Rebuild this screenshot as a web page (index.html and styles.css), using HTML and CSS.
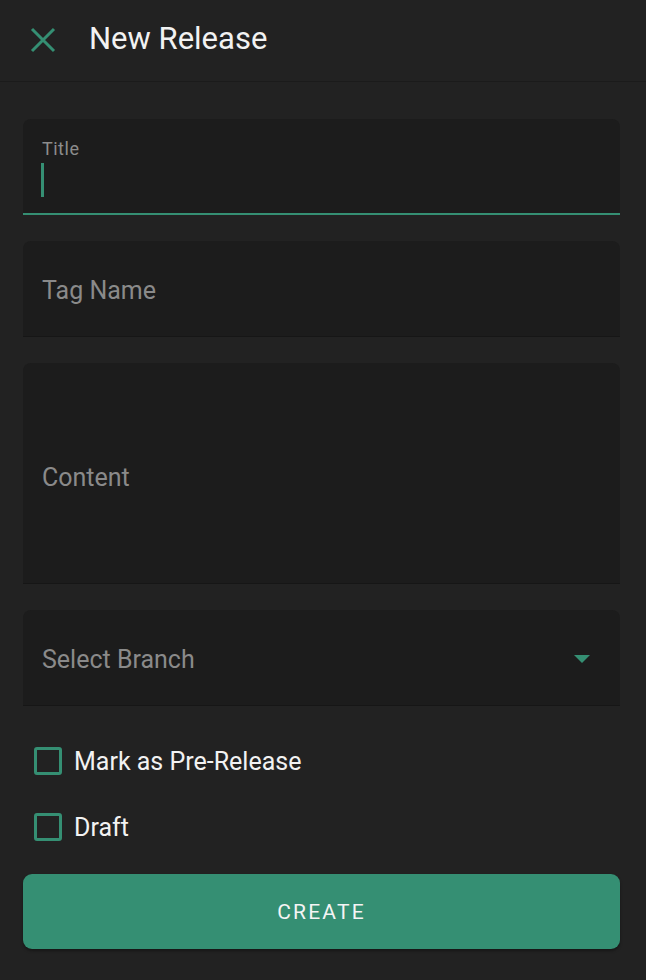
FILE: index.html
```html
<!DOCTYPE html>
<html>
<head>
<meta charset="utf-8">
<link rel="stylesheet" href="styles.css">
</head>
<body>
<div class="app">
  <header class="toolbar">
    <svg class="close" width="26" height="26" viewBox="0 0 26 26"><path d="M2 2 L24 24 M24 2 L2 24" stroke="#358f73" stroke-width="3" stroke-linecap="butt"/></svg>
    <h1 class="title">New Release</h1>
  </header>
  <main class="form">
    <div class="field field-focused">
      <span class="label">Title</span>
      <span class="cursor"></span>
    </div>
    <div class="field"><span class="placeholder">Tag Name</span></div>
    <div class="field field-tall"><span class="placeholder">Content</span></div>
    <div class="field field-select">
      <span class="placeholder">Select Branch</span>
      <span class="arrow"></span>
    </div>
    <div class="checks">
      <label class="check"><span class="box"></span><span class="check-text">Mark as Pre-Release</span></label>
      <label class="check"><span class="box"></span><span class="check-text">Draft</span></label>
    </div>
    <button class="create">CREATE</button>
  </main>
</div>
</body>
</html>
```
FILE: styles.css
```css
* { box-sizing: border-box; }
html, body { margin: 0; padding: 0; }
body {
  background: #222222;
  font-family: Roboto, "Noto Sans", "Liberation Sans", sans-serif;
  width: 646px;
  height: 980px;
  overflow: hidden;
}
.toolbar {
  height: 82px;
  display: flex;
  align-items: center;
  border-bottom: 1px solid #1b1b1b;
  padding-left: 30px;
}
.close { display: block; margin-top: -2px; }
.title {
  margin: 0 0 0 33px;
  font-size: 31px;
  font-weight: 400;
  color: #f2f2f2;
  margin-top: -4px;
}
.form {
  padding: 37px 26px 0 23px;
  display: flex;
  flex-direction: column;
}
.field {
  background: #1c1c1c;
  height: 96px;
  border-radius: 8px 8px 0 0;
  border-bottom: 1px solid #161616;
  padding: 3px 19px 0;
  display: flex;
  align-items: center;
  margin-bottom: 26px;
  position: relative;
}
.field-focused {
  border-bottom: 2px solid #358f73;
  flex-direction: column;
  align-items: flex-start;
  justify-content: flex-start;
  padding-top: 21px;
}
.label {
  font-size: 18px;
  color: #8c8c8c;
  line-height: 18px;
  letter-spacing: 0.5px;
}
.cursor {
  display: block;
  width: 3px;
  height: 34px;
  background: #358f73;
  margin-top: 5px;
  margin-left: -1px;
}
.field-tall { height: 221px; padding-top: 8px; }
.placeholder {
  font-size: 25px;
  color: #8a8a8a;
}
.field-select { justify-content: space-between; padding-right: 30px; }
.arrow {
  width: 0;
  height: 0;
  border-left: 8px solid transparent;
  border-right: 8px solid transparent;
  border-top: 8px solid #358f73;
}
.checks {
  margin-top: -4px;
  display: flex;
  flex-direction: column;
}
.check {
  height: 66px;
  display: flex;
  align-items: center;
  padding-left: 11px;
}
.box {
  width: 28px;
  height: 28px;
  border: 3px solid #358f73;
  border-radius: 3px;
}
.check-text {
  margin-left: 12px;
  font-size: 25px;
  color: #f2f2f2;
}
.create {
  margin-top: 14px;
  height: 75px;
  border: none;
  border-radius: 9px;
  background: #358f73;
  color: #f4f4f4;
  font-family: Roboto, "Noto Sans", "Liberation Sans", sans-serif;
  font-size: 21px;
  font-weight: 400;
  letter-spacing: 2.2px;
  box-shadow: 0 2px 3px rgba(0,0,0,0.35);
}
```
